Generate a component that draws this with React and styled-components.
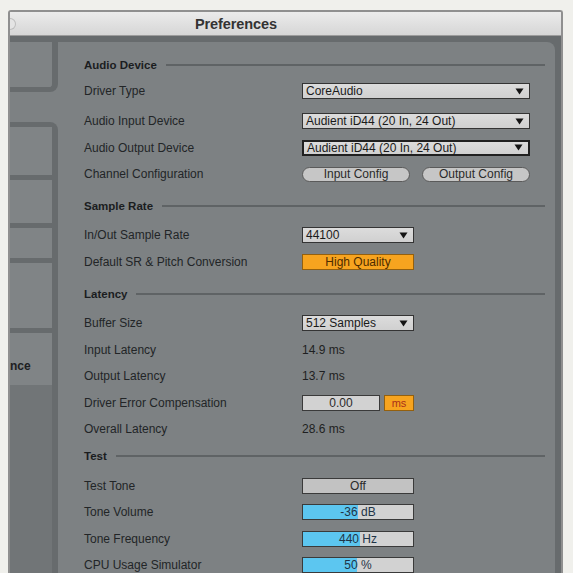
import React from 'react'
import styled, { createGlobalStyle } from 'styled-components'

const GlobalStyle = createGlobalStyle`
  html, body {
    margin: 0;
    padding: 0;
    background: #f0f0ec;
    overflow: hidden;
  }
  body {
    font-family: "Liberation Sans", Arial, sans-serif;
  }
`

const DARK = '#676b6d'
const PANEL = '#7d8183'

function Arrow() {
  return (
    <svg width="9" height="7" viewBox="0 0 9 7">
      <path d="M0.5 0.5 L8.5 0.5 L4.5 6.5 Z" fill="#141414" />
    </svg>
  )
}

function App() {
  return (
    <>
      <GlobalStyle />
      <Page>
        <Window>
          <TitleBar>
            <Knob />
            <Title>Preferences</Title>
          </TitleBar>
          <Body>
            <Sidebar>
              <TabTop />
              <SelectedGap />
              <TabGroup>
                <Tab $h={48} />
                <Tab $h={43} />
                <Tab $h={30} />
                <Tab $h={65} />
                <Tab $h={52} $last>
                  <TabLabel>nce</TabLabel>
                </Tab>
              </TabGroup>
              <SideFill />
            </Sidebar>

            <Panel>
              <Header>
                <HeaderText>Audio Device</HeaderText>
                <Rule />
              </Header>
              <Row>
                <Label>Driver Type</Label>
                <Select $w={228}>
                  <span>CoreAudio</span>
                  <Arrow />
                </Select>
              </Row>
              <Row $mt={3.5}>
                <Label>Audio Input Device</Label>
                <Select $w={228}>
                  <span>Audient iD44 (20 In, 24 Out)</span>
                  <Arrow />
                </Select>
              </Row>
              <Row>
                <Label>Audio Output Device</Label>
                <Select $w={228} $focus>
                  <span>Audient iD44 (20 In, 24 Out)</span>
                  <Arrow />
                </Select>
              </Row>
              <Row>
                <Label>Channel Configuration</Label>
                <ButtonPair>
                  <PillButton>Input Config</PillButton>
                  <PillButton>Output Config</PillButton>
                </ButtonPair>
              </Row>

              <Header $mt={5}>
                <HeaderText>Sample Rate</HeaderText>
                <Rule />
              </Header>
              <Row $mt={3.5}>
                <Label>In/Out Sample Rate</Label>
                <Select $w={112}>
                  <span>44100</span>
                  <Arrow />
                </Select>
              </Row>
              <Row>
                <Label>Default SR &amp; Pitch Conversion</Label>
                <Toggle>High Quality</Toggle>
              </Row>

              <Header $mt={6}>
                <HeaderText>Latency</HeaderText>
                <Rule />
              </Header>
              <Row $mt={3}>
                <Label>Buffer Size</Label>
                <Select $w={112}>
                  <span>512 Samples</span>
                  <Arrow />
                </Select>
              </Row>
              <Row>
                <Label>Input Latency</Label>
                <Value>14.9 ms</Value>
              </Row>
              <Row>
                <Label>Output Latency</Label>
                <Value>13.7 ms</Value>
              </Row>
              <Row>
                <Label>Driver Error Compensation</Label>
                <NumberGroup>
                  <NumberBox>0.00</NumberBox>
                  <UnitBox>ms</UnitBox>
                </NumberGroup>
              </Row>
              <Row>
                <Label>Overall Latency</Label>
                <Value>28.6 ms</Value>
              </Row>

              <Header>
                <HeaderText>Test</HeaderText>
                <Rule />
              </Header>
              <Row $mt={4}>
                <Label>Test Tone</Label>
                <OffBox>Off</OffBox>
              </Row>
              <Row>
                <Label>Tone Volume</Label>
                <Slider $pct={50}>-36 dB</Slider>
              </Row>
              <Row>
                <Label>Tone Frequency</Label>
                <Slider $pct={52}>440 Hz</Slider>
              </Row>
              <Row>
                <Label>CPU Usage Simulator</Label>
                <Slider $pct={49}>50 %</Slider>
              </Row>
            </Panel>
          </Body>
        </Window>
      </Page>
    </>
  )
}

export default App

const Page = styled.div`
  height: 573px;
  padding: 10px 10px 0 8px;
  box-sizing: border-box;
`

const Window = styled.div`
  height: 100%;
  display: flex;
  flex-direction: column;
  border: 2px solid #8f8f8f;
  border-bottom: none;
  border-radius: 3px 3px 0 0;
  overflow: hidden;
`

const TitleBar = styled.div`
  height: 24px;
  flex-shrink: 0;
  display: flex;
  align-items: center;
  background: linear-gradient(#ebebeb, #d6d6d6);
  border-bottom: 1px solid #9c9c9c;
  box-sizing: border-box;
`

const Knob = styled.div`
  width: 5px;
  height: 10px;
  border-radius: 0 6px 6px 0;
  background: #e4e4e4;
  border: 1px solid #bdbdbd;
  border-left: none;
`

const Title = styled.div`
  margin-left: 179px;
  font-size: 14.5px;
  font-weight: bold;
  color: #333;
  letter-spacing: -0.1px;
`

const Body = styled.div`
  flex: 1;
  display: flex;
  background: ${DARK};
  padding: 6px 6px 0 0;
  min-height: 0;
`

const Sidebar = styled.div`
  width: 48px;
  display: flex;
  flex-direction: column;
  background: ${PANEL};
`

const TabTop = styled.div`
  height: 45px;
  background: #7f8385;
  border-right: 6px solid ${DARK};
  border-bottom: 5px solid ${DARK};
  border-bottom-right-radius: 8px;
`

const SelectedGap = styled.div`
  height: 30px;
`

const TabGroup = styled.div`
  display: flex;
  flex-direction: column;
  border-top: 5px solid ${DARK};
  border-right: 6px solid ${DARK};
  border-top-right-radius: 8px;
`

const Tab = styled.div`
  height: ${(p) => p.$h}px;
  background: #808486;
  border-bottom: ${(p) => (p.$last ? 'none' : `5px solid ${DARK}`)};
  display: flex;
  align-items: flex-end;
`

const TabLabel = styled.span`
  font-size: 12px;
  font-weight: bold;
  color: #1e2022;
  padding-bottom: 12px;
`

const SideFill = styled.div`
  flex: 1;
  background: #717577;
  border-right: 6px solid ${DARK};
`

const Panel = styled.div`
  flex: 1;
  background: ${PANEL};
  border-top-right-radius: 8px;
  padding: 10px 10px 0 26px;
  display: flex;
  flex-direction: column;
  color: #1e2123;
  font-size: 12px;
`

const Header = styled.div`
  height: 26px;
  flex-shrink: 0;
  display: flex;
  align-items: center;
  gap: 9px;
  margin-top: ${(p) => p.$mt || 0}px;
`

const HeaderText = styled.span`
  font-weight: bold;
  font-size: 11.5px;
  color: #1b1d1f;
`

const Rule = styled.div`
  flex: 1;
  height: 2px;
  background: #5f6365;
`

const Row = styled.div`
  height: 26.5px;
  flex-shrink: 0;
  display: grid;
  grid-template-columns: 218px auto;
  align-items: center;
  margin-top: ${(p) => p.$mt || 0}px;
`

const Label = styled.span`
  color: #222527;
  white-space: nowrap;
`

const Select = styled.div`
  width: ${(p) => p.$w}px;
  height: 16px;
  box-sizing: border-box;
  display: flex;
  align-items: center;
  justify-content: space-between;
  padding: 0 5px 0 3px;
  background: linear-gradient(#dcdcdc, #d0d0d0);
  border: ${(p) => (p.$focus ? '2px solid #202020' : '1px solid #343434')};
  color: #1a1a1a;
  font-size: 12px;
`

const ButtonPair = styled.div`
  display: flex;
  gap: 12px;
`

const PillButton = styled.div`
  width: 108px;
  height: 15px;
  box-sizing: border-box;
  border-radius: 8px;
  border: 1px solid #5a5a5a;
  background: #c6c6c6;
  display: flex;
  align-items: center;
  justify-content: center;
  color: #2a2a2a;
`

const Toggle = styled.div`
  width: 112px;
  height: 16px;
  box-sizing: border-box;
  border: 1px solid #94600e;
  background: #f7a41f;
  display: flex;
  align-items: center;
  justify-content: center;
  color: #4e2c00;
`

const Value = styled.span`
  color: #1d1f21;
`

const NumberGroup = styled.div`
  display: flex;
  gap: 4px;
`

const NumberBox = styled.div`
  width: 78px;
  height: 16px;
  box-sizing: border-box;
  border: 1px solid #3a3a3a;
  background: #d2d2d2;
  display: flex;
  align-items: center;
  justify-content: center;
  color: #2a2a2a;
`

const UnitBox = styled.div`
  width: 30px;
  height: 16px;
  box-sizing: border-box;
  border: 1px solid #94600e;
  background: #f7a41f;
  display: flex;
  align-items: center;
  justify-content: center;
  color: #a8301a;
  font-size: 11px;
`

const OffBox = styled.div`
  width: 112px;
  height: 16px;
  box-sizing: border-box;
  border: 1px solid #3a3a3a;
  background: #c2c2c2;
  display: flex;
  align-items: center;
  justify-content: center;
  color: #2a2a2a;
`

const Slider = styled.div`
  width: 112px;
  height: 16px;
  box-sizing: border-box;
  border: 1px solid #3a3a3a;
  background: linear-gradient(
    to right,
    #5cc6f0 ${(p) => p.$pct}%,
    #d2d2d2 ${(p) => p.$pct}%
  );
  display: flex;
  align-items: center;
  justify-content: center;
  color: #1f3447;
`
